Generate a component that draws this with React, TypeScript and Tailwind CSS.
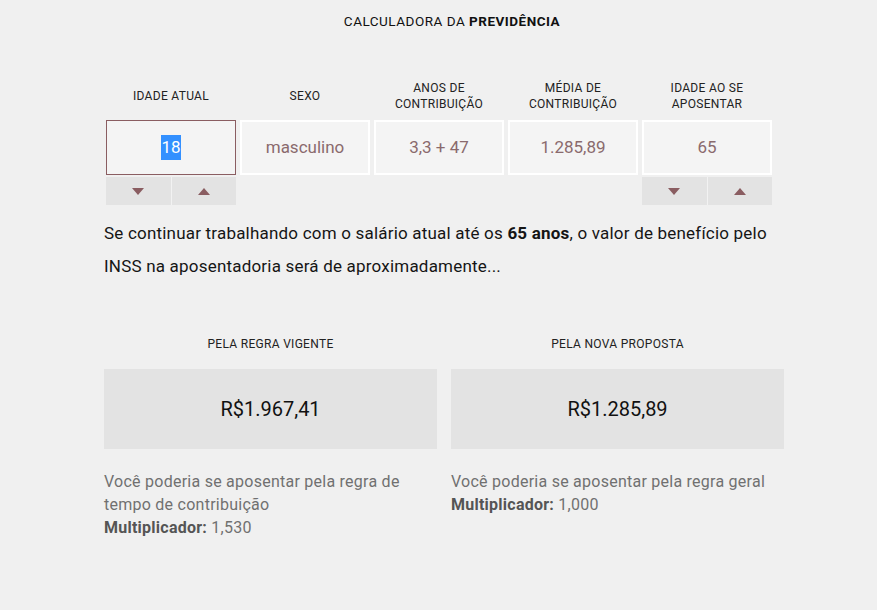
import React from 'react';

const font = { fontFamily: 'Roboto, "Liberation Sans", sans-serif' };

const Arrow = ({ up }: { up?: boolean }) => (
  <svg width="12" height="7" viewBox="0 0 12 7">
    <path d={up ? 'M0 7 L6 0 L12 7 Z' : 'M0 0 L12 0 L6 7 Z'} fill="#8a5d61" />
  </svg>
);

const Stepper = () => (
  <div className="flex h-[28px] bg-[#e3e3e3] mt-[2px]">
    <button className="flex-1 flex items-center justify-center border-r border-[#f2f2f2]">
      <Arrow />
    </button>
    <button className="flex-1 flex items-center justify-center">
      <Arrow up />
    </button>
  </div>
);

type Field = { label: string[]; value: React.ReactNode; active?: boolean; stepper?: boolean };

const fields: Field[] = [
  { label: ['IDADE ATUAL'], value: <span className="bg-[#3390ff] text-white">18</span>, active: true, stepper: true },
  { label: ['SEXO'], value: 'masculino' },
  { label: ['ANOS DE', 'CONTRIBUIÇÃO'], value: '3,3 + 47' },
  { label: ['MÉDIA DE', 'CONTRIBUIÇÃO'], value: '1.285,89' },
  { label: ['IDADE AO SE', 'APOSENTAR'], value: '65', stepper: true },
];

const results = [
  { title: 'PELA REGRA VIGENTE', value: 'R$1.967,41', desc: 'Você poderia se aposentar pela regra de tempo de contribuição', mult: '1,530' },
  { title: 'PELA NOVA PROPOSTA', value: 'R$1.285,89', desc: 'Você poderia se aposentar pela regra geral', mult: '1,000' },
];

export default function App() {
  return (
    <div className="min-h-[610px] w-full bg-[#f0f0f0] text-[#111]" style={font}>
      <div className="w-[680px] ml-[104px]">
        <h1 className="pt-[13px] pl-[16px] text-center text-[13.5px] leading-[16px] tracking-[0.5px]">
          CALCULADORA DA <b className="font-bold">PREVIDÊNCIA</b>
        </h1>

        {/* input fields */}
        <div className="mt-[51px] ml-[2px] grid grid-cols-[repeat(5,130px)] gap-x-[4px]">
          {fields.map((f, i) => (
            <div key={i} className="flex flex-col">
              <div className="h-[32px] flex flex-col justify-center items-center text-[12px] leading-[16px] tracking-[0.3px] text-[#222]">
                {f.label.map((l) => (
                  <span key={l}>{l}</span>
                ))}
              </div>
              <div
                className={`mt-[8px] h-[55px] flex items-center justify-center bg-[#f4f4f4] text-[17px] text-[#8a6a6d] border ${
                  f.active ? 'border-[#8a5d61]' : 'border-white border-2'
                }`}
              >
                {f.value}
              </div>
              {f.stepper && <Stepper />}
            </div>
          ))}
        </div>

        <p className="mt-[12px] text-[17px] leading-[33px] tracking-[0.2px] text-[#151515]">
          Se continuar trabalhando com o salário atual até os <b className="font-bold">65 anos</b>, o valor de benefício pelo INSS na aposentadoria será de aproximadamente...
        </p>

        {/* results */}
        <div className="mt-[53px] grid grid-cols-2 gap-x-[14px]">
          {results.map((r) => (
            <div key={r.title}>
              <div className="text-center text-[12px] leading-[16px] tracking-[0.3px] text-[#222]">{r.title}</div>
              <div className="mt-[17px] h-[80px] bg-[#e3e3e3] flex items-center justify-center text-[20px]">{r.value}</div>
              <div className="mt-[21px] text-[16px] leading-[23px] tracking-[0.25px] text-[#707070]">
                <p>{r.desc}</p>
                <p>
                  <b className="font-bold text-[#555]">Multiplicador:</b> {r.mult}
                </p>
              </div>
            </div>
          ))}
        </div>
      </div>
    </div>
  );
}
